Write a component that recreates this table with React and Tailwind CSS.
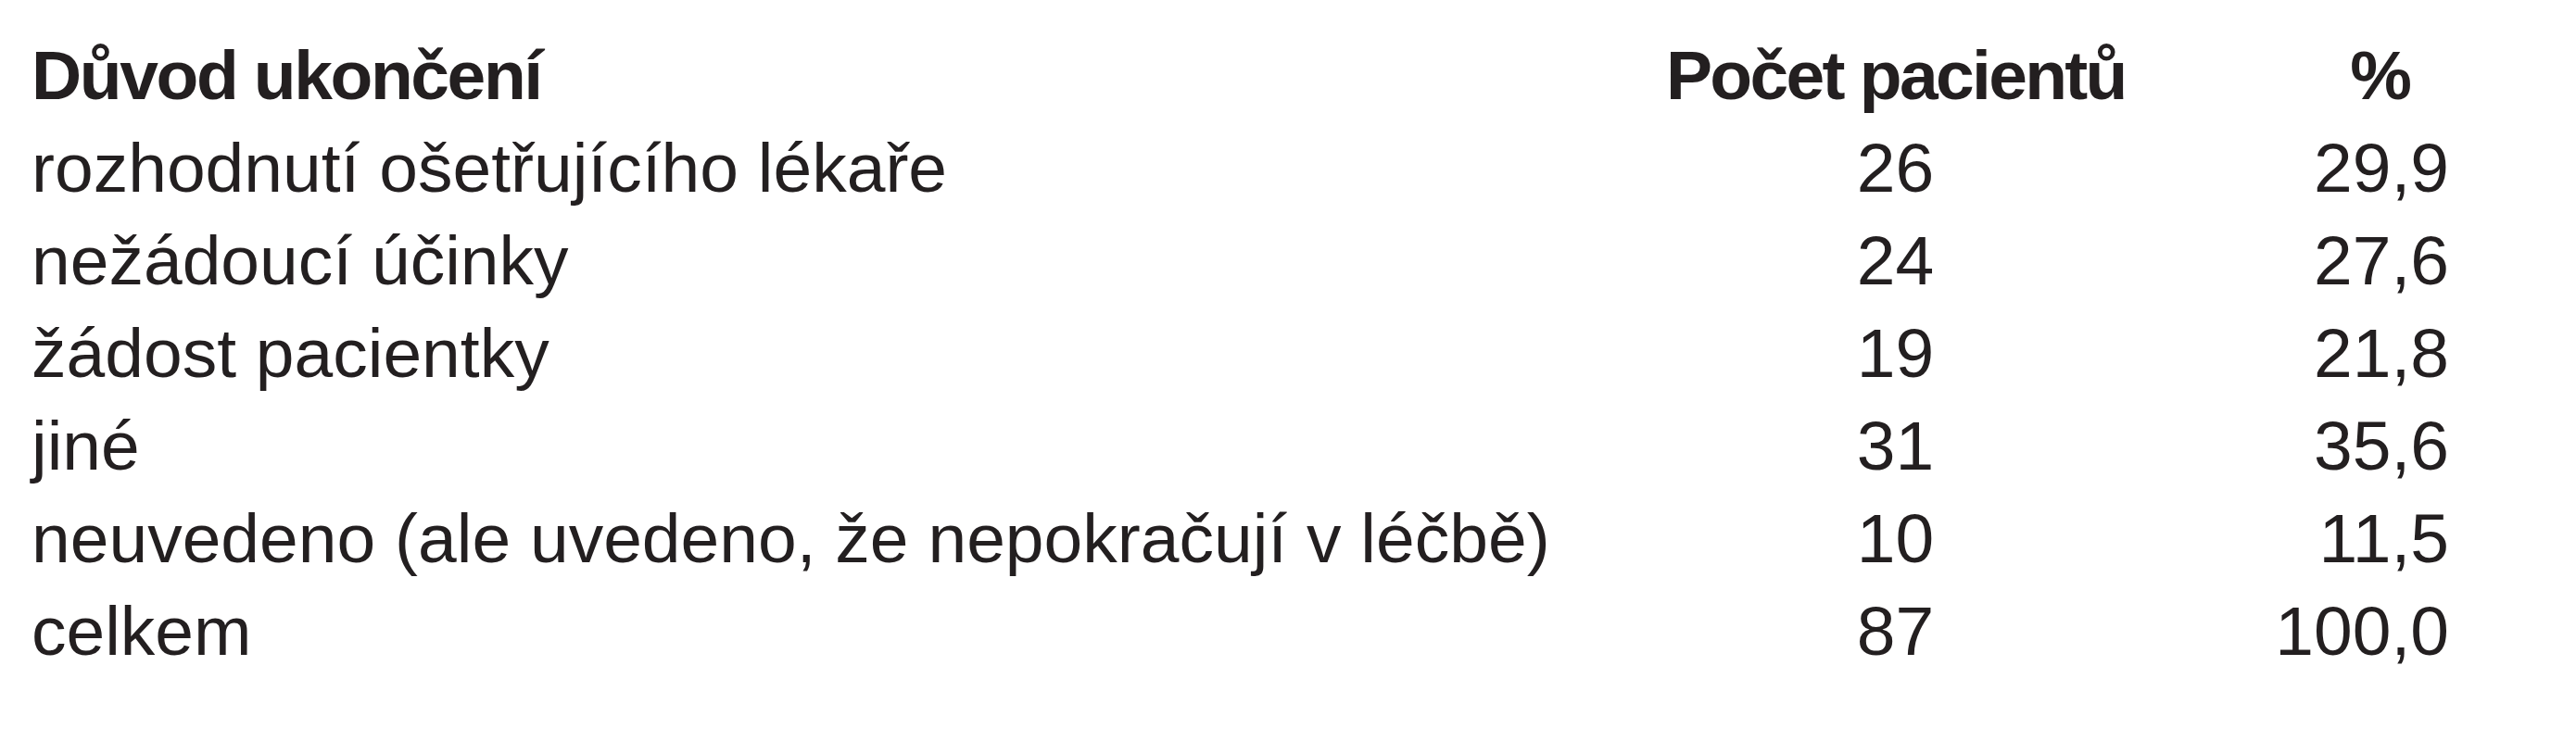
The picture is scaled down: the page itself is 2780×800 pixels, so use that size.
const rows = [
  { reason: "rozhodnutí ošetřujícího lékaře", count: "26", pct: "29,9" },
  { reason: "nežádoucí účinky", count: "24", pct: "27,6" },
  { reason: "žádost pacientky", count: "19", pct: "21,8" },
  { reason: "jiné", count: "31", pct: "35,6" },
  { reason: "neuvedeno (ale uvedeno, že nepokračují v léčbě)", count: "10", pct: "11,5" },
  { reason: "celkem", count: "87", pct: "100,0" },
];

export default function App() {
  return (
    <div className="w-[2780px] h-[800px] bg-white text-[#231f20] font-['Liberation_Sans',Arial,sans-serif] pl-[34px] pt-[31px]">
      <div className="grid grid-cols-[1764px_495px_350px] text-[75px] leading-[100px] whitespace-nowrap">
        <div className="font-bold tracking-[-2.4px]">Důvod ukončení</div>
        <div className="font-bold tracking-[-2.7px] text-center">Počet pacientů</div>
        <div className="font-bold text-right pr-[40px]">%</div>

        {rows.map((row) => (
          <div key={row.reason} className="contents">
            <div>{row.reason}</div>
            <div className="text-center">{row.count}</div>
            <div className="text-right">{row.pct}</div>
          </div>
        ))}
      </div>
    </div>
  );
}
